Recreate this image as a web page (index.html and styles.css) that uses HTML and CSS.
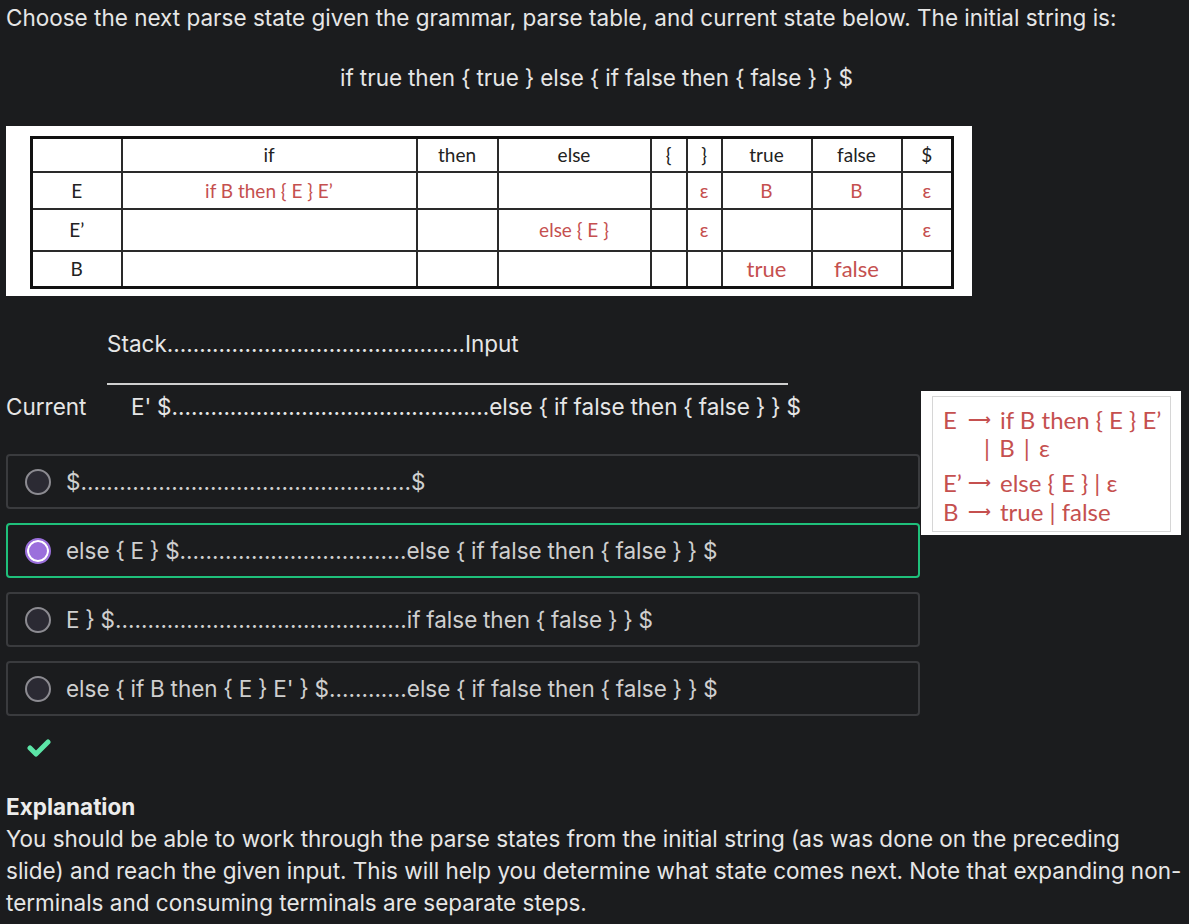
FILE: index.html
```html
<!DOCTYPE html>
<html>
<head>
<meta charset="utf-8">
<link rel="stylesheet" href="styles.css">
</head>
<body>
<p class="prompt">Choose the next parse state given the grammar, parse table, and current state below. The initial string is:</p>
<p class="target">if true then { true } else { if false then { false } } $</p>

<div class="figure-table">
  <table class="parse">
    <colgroup>
      <col class="c0"><col class="c1"><col class="c2"><col class="c3"><col class="c4"><col class="c5"><col class="c6"><col class="c7"><col class="c8">
    </colgroup>
    <tr class="r0"><td></td><td>if</td><td>then</td><td>else</td><td>{</td><td>}</td><td>true</td><td>false</td><td>$</td></tr>
    <tr class="r1"><td>E</td><td class="red">if B then { E } E’</td><td></td><td></td><td></td><td class="red">ε</td><td class="red">B</td><td class="red">B</td><td class="red">ε</td></tr>
    <tr class="r2"><td>E’</td><td></td><td></td><td class="red">else { E }</td><td></td><td class="red">ε</td><td></td><td></td><td class="red">ε</td></tr>
    <tr class="r3"><td>B</td><td></td><td></td><td></td><td></td><td></td><td class="red big">true</td><td class="red big">false</td><td></td></tr>
  </table>
</div>

<div class="stack-head">Stack..............................................Input</div>
<div class="rule"></div>

<div class="main">
  <div class="left">
    <div class="current"><span class="lbl">Current</span><span>E' $.................................................else { if false then { false } } $</span></div>
    <div class="options">
      <div class="option"><span class="radio"></span><span>$...................................................$</span></div>
      <div class="option selected"><span class="radio"></span><span>else { E } $...................................else { if false then { false } } $</span></div>
      <div class="option"><span class="radio"></span><span>E } $.............................................if false then { false } } $</span></div>
      <div class="option"><span class="radio"></span><span>else { if B then { E } E' } $............else { if false then { false } } $</span></div>
    </div>
    <svg class="check" width="26" height="20" viewBox="0 0 26 20"><polyline points="3,10 9,16 21,4" fill="none" stroke="#5ce5a7" stroke-width="5" stroke-linecap="round" stroke-linejoin="round"/></svg>
  </div>
  <div class="grammar">
    <div class="gbox">
      <div class="gl l1"><span class="lhs">E</span><span class="arr">⟶</span><span>if B then { E } E’</span></div>
      <div class="gl alt"><span>| B | ε</span></div>
      <div class="gl"><span class="lhs">E’</span><span class="arr">⟶</span><span>else { E } | ε</span></div>
      <div class="gl"><span class="lhs">B</span><span class="arr">⟶</span><span>true | false</span></div>
    </div>
  </div>
</div>

<h3 class="exp-title">Explanation</h3>
<p class="exp">You should be able to work through the parse states from the initial string (as was done on the preceding<br>slide) and reach the given input. This will help you determine what state comes next. Note that expanding non-terminals and consuming terminals are separate steps.</p>
</body>
</html>
```
FILE: styles.css
```css
html, body {
  margin: 0;
  background: #1b1c1e;
}
body {
  padding: 2px 2px 0 6px;
  font-family: Inter, "Noto Sans", sans-serif;
  font-size: 22.5px;
  line-height: 32px;
  color: #e6e6e6;
}
.prompt { margin: 0; }
.target { margin: 28px 0 0; text-align: center; word-spacing: -0.4px; }

.figure-table {
  margin-top: 32px;
  width: 966px;
  height: 170px;
  box-sizing: border-box;
  background: #fff;
  padding: 10px 0 0 24px;
}
.parse {
  border-collapse: collapse;
  table-layout: fixed;
  width: 923px;
  border: 3px solid #111;
  font-family: Lato, "Open Sans", sans-serif;
  font-size: 19px;
  line-height: 20px;
  color: #222;
}
.parse td {
  border: 2px solid #2a2a2a;
  text-align: center;
  padding: 0;
}
.c0 { width: 90px; } .c1 { width: 295px; } .c2 { width: 81px; } .c3 { width: 153px; }
.c4 { width: 36px; } .c5 { width: 35px; } .c6 { width: 90px; } .c7 { width: 90px; } .c8 { width: 51px; }
.r0 td { height: 32px; }
.r1 td { height: 35px; }
.r2 td { height: 40px; }
.r3 td { height: 34px; }
.parse .red { color: #c5504f; }
.parse .big { font-size: 22px; }

.stack-head { margin-top: 32px; padding-left: 101px; }
.rule {
  margin: 23px 0 0 101px;
  width: 681px;
  height: 2px;
  background: #cfcfcf;
}

.main { display: flex; gap: 1px; margin-top: 6px; align-items: flex-start; }
.left { width: 914px; flex: none; }
.current { display: flex; white-space: nowrap; word-spacing: -0.5px; }
.lbl { width: 125px; }

.options { margin-top: 31px; display: flex; flex-direction: column; gap: 14px; }
.option {
  height: 55px;
  box-sizing: border-box;
  border: 2px solid #3a3b3e;
  border-radius: 4px;
  display: flex;
  align-items: center;
  padding-left: 17px;
  gap: 15px;
  color: #cfcfcf;
  white-space: nowrap;
  word-spacing: -0.6px;
}
.option.selected { border-color: #1fc07b; }
.radio {
  width: 26px;
  height: 26px;
  box-sizing: border-box;
  border-radius: 50%;
  border: 2px solid #8c8b91;
  background: #2b2a33;
  flex: none;
}
.selected .radio {
  border: 2px solid #9b6fdc;
  background: #9b6fdc;
  box-shadow: inset 0 0 0 2px #fff;
}
.check { display: block; margin: 22px 0 0 21px; }

.grammar {
  width: 260px;
  height: 144px;
  flex: none;
  background: #fff;
  box-sizing: border-box;
  padding: 5px 10px 3px 11px;
}
.gbox {
  height: 100%;
  box-sizing: border-box;
  border: 1px solid #d6d6d6;
  padding: 8px 0 0 10px;
  font-family: Lato, "Open Sans", sans-serif;
  font-size: 24px;
  line-height: 29px;
  color: #c5504f;
}
.gl { display: flex; white-space: nowrap; }
.gl.l1 { height: 28px; }
.lhs { width: 24px; }
.arr { width: 33px; font-family: "DejaVu Sans", sans-serif; font-size: 16px; font-weight: 700; padding-left: 1px; box-sizing: border-box; }
.gl.alt { padding-left: 41px; margin-bottom: 6px; word-spacing: 3px; }

.exp-title { margin: 33px 0 0; font-size: 22.5px; line-height: 32px; font-weight: 700; color: #ececec; }
.exp { margin: 0; color: #e6e6e6; }
```
